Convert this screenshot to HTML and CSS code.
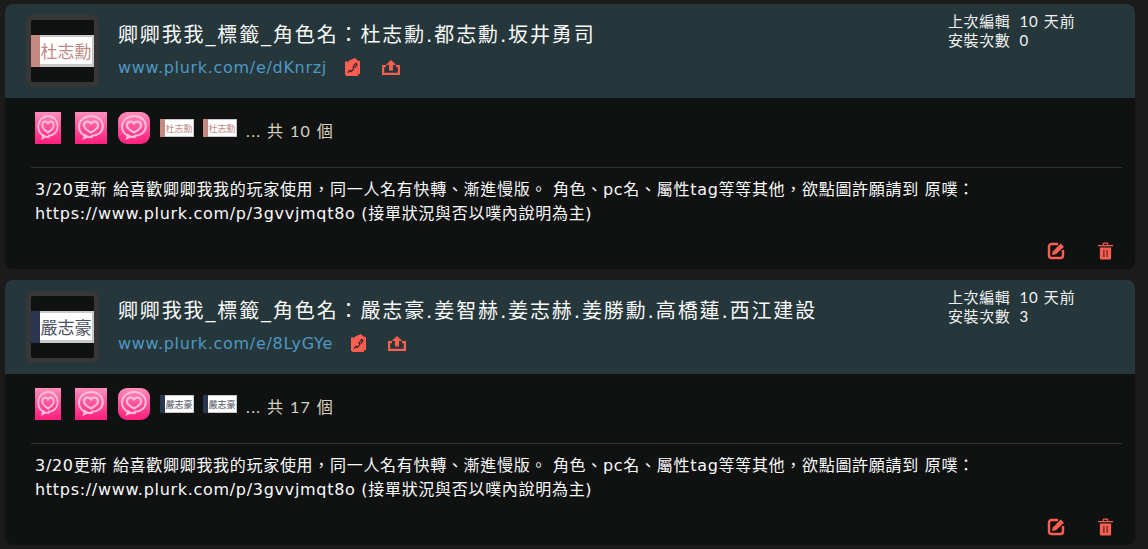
FILE: index.html
```html
<!DOCTYPE html>
<html lang="zh-Hant">
<head>
<meta charset="utf-8">
<title>卿卿我我</title>
<link rel="stylesheet" href="styles.css">
</head>
<body>
<svg class="defs" width="0" height="0" aria-hidden="true">
  <defs>
    <linearGradient id="pink" x1="0" y1="0" x2="0" y2="1">
      <stop offset="0" stop-color="#ff8fbb"/>
      <stop offset="0.6" stop-color="#ff4593"/>
      <stop offset="1" stop-color="#ff1f7d"/>
    </linearGradient>
    <symbol id="swirl" viewBox="0 0 32 32" preserveAspectRatio="none">
      <rect width="32" height="32" fill="url(#pink)"/>
      <path d="M17 25C9.500 25.500 3.800 20.500 4 14.500 4.300 8 10 4 16.200 4c6.500 0 11.800 4.300 11.600 10.500-.2 5.800-5.200 9-11 9.200" fill="none" stroke="#ffbdd6" stroke-width="2" stroke-linecap="round"/>
      <path d="M7.500 28l1.800-6.500 5 3.500z" fill="#ffbdd6"/>
      <path d="M16 20.500c-4-2-7.500-4.800-7-8 .5-3.200 5-4 7-1.200 2-2.800 6.500-2 7 1.200.5 3.200-3 6-7 8z" fill="none" stroke="#ffbdd6" stroke-width="2.200"/>
    </symbol>
    <symbol id="i-copy" viewBox="0 0 15 18">
      <path d="M4 2.500 10 0l2.500 2.500L15 3v13l-2 .3V18H1.500L0 16.500V3.500h4z" fill="#fa5f52"/>
      <path d="M12.500 2.500v13.800" stroke="#d5544a" stroke-width=".7"/>
      <path d="M2.800 14.500l2.600-2.200 1 1.300 2.600-3.300-1-1 2.600-4 1.300 1-2 3.500" stroke="#2a2124" stroke-width="1.100" fill="none"/>
    </symbol>
    <symbol id="i-up" viewBox="0 0 18 15">
      <path d="M9 0l5.200 5H11v5.500H7V5H3.800z" fill="#fa5f52"/>
      <path d="M0 5h4v2.200H2.200v5.600h13.600V7.200H14V5h4v10H0z" fill="#fa5f52"/>
    </symbol>
    <symbol id="i-edit" viewBox="0 0 18 18">
      <path d="M11 2H4.500A2.500 2.500 0 0 0 2 4.500v9A2.500 2.500 0 0 0 4.500 16h9a2.500 2.500 0 0 0 2.500-2.500V8" fill="none" stroke="#fa5f52" stroke-width="2.400"/>
      <path d="M5 13l.8-3.600L13.600 1.500 17 4.700 9 12.300z" fill="#fa5f52"/>
    </symbol>
    <symbol id="i-trash" viewBox="0 0 16 18" preserveAspectRatio="none">
      <path d="M0 3h16v1.300H0zM5 3V1.500A1 1 0 0 1 6 .5h4a1 1 0 0 1 1 1V3H9.800V1.700H6.200V3z" fill="#fa5f52"/>
      <path d="M2 5.500h12V16a1.500 1.500 0 0 1-1.500 1.500h-9A1.500 1.500 0 0 1 2 16z" fill="#fa5f52"/>
      <path d="M6.300 8v7M9.700 8v7" stroke="#5a2622" stroke-width="1.300"/>
    </symbol>
  </defs>
</svg>

<article class="card">
  <header class="head">
    <div class="avatar"><div class="tag tag-rose tag-large"><span class="tag-text">杜志勳</span></div></div>
    <div class="info">
      <h2 class="title">卿卿我我_標籤_角色名&#xFF1A;杜志勳.都志勳.坂井勇司</h2>
      <div class="linkline">
        <a class="url">www.plurk.com/e/dKnrzj</a>
        <svg class="ic ic-copy"><use href="#i-copy"/></svg>
        <svg class="ic ic-up"><use href="#i-up"/></svg>
      </div>
    </div>
    <dl class="stats">
      <dt>上次編輯</dt><dd>10 天前</dd>
      <dt>安裝次數</dt><dd>0</dd>
    </dl>
  </header>
  <div class="body">
    <div class="stamps">
      <svg class="stamp stamp-a"><use href="#swirl"/></svg>
      <svg class="stamp stamp-b"><use href="#swirl"/></svg>
      <svg class="stamp stamp-c"><use href="#swirl"/></svg>
      <div class="tag tag-rose tag-small"><span class="tag-text">杜志勳</span></div>
      <div class="tag tag-rose tag-small"><span class="tag-text">杜志勳</span></div>
      <span class="count">... 共 10 個</span>
    </div>
    <p class="desc">3/20更新 給喜歡卿卿我我的玩家使用&#xFF0C;同一人名有快轉、漸進慢版。 角色、pc名、屬性tag等等其他&#xFF0C;欲點圖許願請到 原噗&#xFF1A;<br>https://www.plurk.com/p/3gvvjmqt8o (接單狀況與否以噗內說明為主)</p>
    <div class="actions">
      <svg class="ic ic-edit"><use href="#i-edit"/></svg>
      <svg class="ic ic-trash"><use href="#i-trash"/></svg>
    </div>
  </div>
</article>

<article class="card">
  <header class="head">
    <div class="avatar"><div class="tag tag-navy tag-large"><span class="tag-text">嚴志豪</span></div></div>
    <div class="info">
      <h2 class="title">卿卿我我_標籤_角色名&#xFF1A;嚴志豪.姜智赫.姜志赫.姜勝勳.高橋蓮.西江建設</h2>
      <div class="linkline">
        <a class="url">www.plurk.com/e/8LyGYe</a>
        <svg class="ic ic-copy"><use href="#i-copy"/></svg>
        <svg class="ic ic-up"><use href="#i-up"/></svg>
      </div>
    </div>
    <dl class="stats">
      <dt>上次編輯</dt><dd>10 天前</dd>
      <dt>安裝次數</dt><dd>3</dd>
    </dl>
  </header>
  <div class="body">
    <div class="stamps">
      <svg class="stamp stamp-a"><use href="#swirl"/></svg>
      <svg class="stamp stamp-b"><use href="#swirl"/></svg>
      <svg class="stamp stamp-c"><use href="#swirl"/></svg>
      <div class="tag tag-navy tag-small"><span class="tag-text">嚴志豪</span></div>
      <div class="tag tag-navy tag-small"><span class="tag-text">嚴志豪</span></div>
      <span class="count">... 共 17 個</span>
    </div>
    <p class="desc">3/20更新 給喜歡卿卿我我的玩家使用&#xFF0C;同一人名有快轉、漸進慢版。 角色、pc名、屬性tag等等其他&#xFF0C;欲點圖許願請到 原噗&#xFF1A;<br>https://www.plurk.com/p/3gvvjmqt8o (接單狀況與否以噗內說明為主)</p>
    <div class="actions">
      <svg class="ic ic-edit"><use href="#i-edit"/></svg>
      <svg class="ic ic-trash"><use href="#i-trash"/></svg>
    </div>
  </div>
</article>
</body>
</html>
```

FILE: styles.css
```css
* { box-sizing: border-box; }
html, body { height: 100%; }
body {
  margin: 0;
  padding: 4px 13px 0 5px;
  background: #1b1b1b;
  overflow: hidden;
  color: #f2f2f2;
  font-family: "DejaVu Sans", "Noto Sans CJK TC", sans-serif;
}
.defs { display: block; height: 0; }
.card {
  height: 265px;
  margin-bottom: 11px;
  border-radius: 8px;
  background: #101212;
}
.head {
  height: 94px;
  background: #25373a;
  border-radius: 8px 8px 0 0;
  display: flex;
  align-items: flex-start;
  padding: 11px 0 0 21px;
}
.avatar {
  width: 73px;
  height: 72px;
  border: 5px solid #373737;
  border-radius: 7px;
  background: #101212;
  display: flex;
  align-items: center;
  flex: none;
}
.tag {
  display: flex;
  align-items: stretch;
  flex: none;
  white-space: nowrap;
  font-family: "Noto Sans CJK TC", sans-serif;
}
.tag::before {
  content: "";
  flex: none;
  display: block;
}
.tag-text {
  flex: 1;
  min-width: 0;
  display: flex;
  align-items: center;
  justify-content: center;
  background: #fff;
  border: solid #c9c9c9;
}
.tag-large {
  width: 100%;
  height: 32px;
  font-size: 17px;
}
.tag-large::before { width: 9px; }
.tag-large .tag-text { border-width: 2px 2px 3px 0; }
.tag-small {
  width: 34px;
  height: 18px;
  font-size: 9px;
}
.tag-small::before { width: 5px; }
.tag-small .tag-text { border-width: 1px 1px 1px 0; }
.tag-rose { color: #bf8a84; }
.tag-rose::before { background: #c48a82; }
.tag-navy { color: #4a5060; }
.tag-navy::before { background: #2a3650; }
.info {
  flex: 1;
  margin-left: 19px;
  min-width: 0;
}
.title {
  margin: 5px 0 0;
  font-size: 20px;
  font-weight: 400;
  line-height: 30px;
  letter-spacing: 1.870px;
  color: #fafafa;
  white-space: nowrap;
}
.linkline {
  display: flex;
  align-items: center;
  margin-top: 6px;
  height: 22px;
}
.url {
  font-size: 16px;
  letter-spacing: .7px;
  color: #4f97c4;
}
.ic { display: block; flex: none; }
.ic-copy { width: 15px; height: 18px; margin-left: 18px; }
.ic-up { width: 18px; height: 15px; margin-left: 22px; }
.stats {
  flex: none;
  width: 187px;
  margin: -3px 0 0;
  display: grid;
  grid-template-columns: auto 1fr;
  grid-auto-rows: 19px;
  column-gap: 9px;
  font-family: "Lato", "Noto Sans CJK TC", sans-serif;
  font-size: 15px;
  line-height: 19px;
  letter-spacing: .6px;
  color: #f2f2f2;
}
.stats dd { margin: 0; letter-spacing: 1px; }
.body { padding: 0 13px 0 26px; }
.stamps {
  display: flex;
  align-items: center;
  height: 69px;
  padding: 0 0 9px 4px;
}
.stamp { display: block; height: 32px; flex: none; }
.stamp-a { width: 26px; }
.stamp-b { width: 32px; margin-left: 14px; }
.stamp-c { width: 32px; margin-left: 11px; border-radius: 9px; }
.stamps .tag { margin-left: 10px; }
.stamps .tag + .tag { margin-left: 9px; }
.count {
  margin: 3px 0 0 9px;
  font-family: "Lato", "Noto Sans CJK TC", sans-serif;
  font-size: 16px;
  letter-spacing: 1.400px;
  color: #d8d2c0;
}
.desc {
  margin: 0;
  border-top: 1px solid #333;
  padding: 10px 0 0 4px;
  font-size: 16px;
  line-height: 24px;
  letter-spacing: .7px;
  color: #fafafa;
}
.actions {
  display: flex;
  justify-content: flex-end;
  align-items: center;
  margin-top: 16px;
  padding-right: 9px;
}
.ic-edit { width: 18px; height: 18px; }
.ic-trash { width: 15px; height: 18px; margin-left: 33px; }
```
